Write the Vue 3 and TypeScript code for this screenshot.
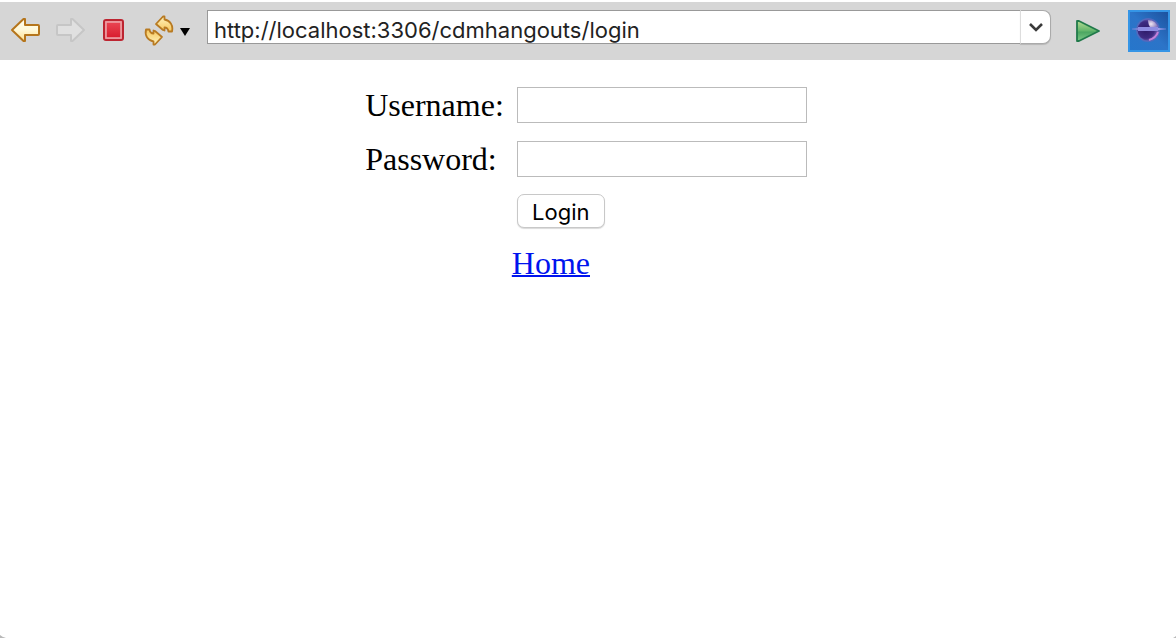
<script setup lang="ts">
import { ref } from 'vue'

const address = ref<string>('http://localhost:3306/cdmhangouts/login')
const username = ref<string>('')
const password = ref<string>('')
</script>

<template>
  <div class="browser">
    <header class="toolbar">
      <nav class="tools" aria-label="Navigation">
        <button class="tool" type="button" aria-label="Back">
          <svg width="32" height="32" viewBox="0 0 32 32">
            <defs>
              <linearGradient id="back-fill" x1="0" y1="0" x2="0" y2="1">
                <stop offset="0" stop-color="#fffdf0" />
                <stop offset="0.5" stop-color="#fff8d8" />
                <stop offset="1" stop-color="#ffe08c" />
              </linearGradient>
            </defs>
            <path d="M2 16L13.5 5H15V11H28Q29 11 29 12V20Q29 21 28 21H15V27H13.5Z" fill="url(#back-fill)" stroke="#b5751b" stroke-width="2" stroke-linejoin="round" />
          </svg>
        </button>
        <button class="tool" type="button" aria-label="Forward">
          <svg width="32" height="32" viewBox="0 0 32 32">
            <path d="M30 16L18.5 5H17V11H4Q3 11 3 12V20Q3 21 4 21H17V27H18.5Z" fill="#e0e0e0" stroke="#c6c6c6" stroke-width="2" stroke-linejoin="round" />
          </svg>
        </button>
        <button class="tool" type="button" aria-label="Stop">
          <svg width="32" height="32" viewBox="0 0 32 32">
            <defs>
              <linearGradient id="stop-fill" x1="0" y1="0" x2="0" y2="1">
                <stop offset="0" stop-color="#ea4553" />
                <stop offset="1" stop-color="#d81c2d" />
              </linearGradient>
            </defs>
            <rect x="6" y="6" width="19" height="20" rx="2" fill="#e0707a" stroke="#bd2531" stroke-width="2" />
            <rect x="8" y="8" width="15" height="16" fill="url(#stop-fill)" stroke="#eea0a5" stroke-width="1.6" />
          </svg>
        </button>
        <div class="refresh">
          <button class="tool" type="button" aria-label="Refresh">
            <svg width="32" height="34" viewBox="0 0 32 34">
              <defs>
                <linearGradient id="refresh-fill" x1="0" y1="0" x2="0" y2="1">
                  <stop offset="0" stop-color="#fff3bd" />
                  <stop offset="1" stop-color="#f6c65c" />
                </linearGradient>
                <linearGradient id="refresh-fill-low" x1="0" y1="1" x2="0" y2="0">
                  <stop offset="0" stop-color="#f6c65c" />
                  <stop offset="1" stop-color="#fff3bd" />
                </linearGradient>
              </defs>
              <g stroke="#b87a22" stroke-width="1.8" stroke-linejoin="round">
                <path d="M14 11L21 3.5L22.5 3.5V6.5C28 7.5 31.5 12 30 18.5H26.5C26 15.5 25 14.5 22.5 14.5V17.5L21 17Z" fill="url(#refresh-fill)" />
                <path d="M14 11L21 3.5L22.5 3.5V6.5C28 7.5 31.5 12 30 18.5H26.5C26 15.5 25 14.5 22.5 14.5V17.5L21 17Z" fill="url(#refresh-fill-low)" transform="rotate(180 17 17.5)" />
              </g>
            </svg>
          </button>
          <button class="tool caret" type="button" aria-label="Refresh options">
            <svg width="12" height="14" viewBox="0 0 12 14">
              <path d="M1 5H11L6 13Z" fill="#000" />
            </svg>
          </button>
        </div>
      </nav>

      <div class="address">
        <input v-model="address" class="address-input" type="text" aria-label="Address" spellcheck="false" />
        <button class="address-toggle" type="button" aria-label="Show address history">
          <svg width="16" height="12" viewBox="0 0 16 12">
            <path d="M2 3L8 9L14 3" fill="none" stroke="#3a3a3a" stroke-width="2.6" />
          </svg>
        </button>
      </div>

      <button class="tool run" type="button" aria-label="Go">
        <svg width="28" height="26" viewBox="0 0 28 26">
          <defs>
            <linearGradient id="run-fill" x1="0" y1="0" x2="0" y2="1">
              <stop offset="0" stop-color="#b4dc92" />
              <stop offset="0.5" stop-color="#62b56b" />
              <stop offset="0.55" stop-color="#4ba661" />
              <stop offset="1" stop-color="#7cc987" />
            </linearGradient>
          </defs>
          <path d="M3 3H5L25 13L5 23H3Z" fill="url(#run-fill)" stroke="#217a4b" stroke-width="1.8" stroke-linejoin="round" />
        </svg>
      </button>

      <svg class="logo" width="42" height="42" viewBox="0 0 42 42" role="img" aria-label="Eclipse">
        <defs>
          <linearGradient id="logo-sky" x1="0" y1="1" x2="1" y2="0">
            <stop offset="0" stop-color="#2676cb" />
            <stop offset="0.5" stop-color="#2c74c8" />
            <stop offset="1" stop-color="#1c529f" />
          </linearGradient>
          <radialGradient id="logo-planet" cx="0.4" cy="0.5" r="0.6">
            <stop offset="0" stop-color="#2d1a68" />
            <stop offset="0.65" stop-color="#3e2b82" />
            <stop offset="1" stop-color="#7e6cc0" />
          </radialGradient>
          <radialGradient id="logo-shine" cx="0.3" cy="0.5" r="0.7">
            <stop offset="0" stop-color="#f0e6f2" />
            <stop offset="1" stop-color="#7f70b8" />
          </radialGradient>
          <linearGradient id="logo-beam" x1="0" y1="0" x2="1" y2="0">
            <stop offset="0" stop-color="#8a8be0" stop-opacity="0.3" />
            <stop offset="0.3" stop-color="#8d98e8" />
            <stop offset="0.75" stop-color="#a9a4ee" />
            <stop offset="1" stop-color="#8a8be0" stop-opacity="0.3" />
          </linearGradient>
        </defs>
        <rect width="42" height="42" fill="#3595e6" />
        <rect x="2" y="2" width="38" height="38" fill="url(#logo-sky)" />
        <circle cx="20" cy="20" r="12" fill="#5269bd" />
        <circle cx="20" cy="20" r="10.5" fill="url(#logo-planet)" />
        <path d="M20 10Q28 10 30 18H23Q20 15 20 10Z" fill="url(#logo-shine)" />
        <path d="M30 22Q28 28 21 30" fill="none" stroke="#c57fda" stroke-width="2" />
        <rect x="4" y="18" width="34" height="2" fill="url(#logo-beam)" />
        <rect x="10" y="17" width="20" height="4" fill="#8f8ce2" />
      </svg>
    </header>

    <main class="page">
      <form class="login" @submit.prevent>
        <label class="label" for="username">Username:</label>
        <input id="username" v-model="username" class="field" type="text" />
        <label class="label" for="password">Password:</label>
        <input id="password" v-model="password" class="field" type="password" />
        <button class="submit" type="submit">Login</button>
        <a class="home" href="#">Home</a>
      </form>
    </main>

    <svg class="corner corner-left" width="6" height="3" viewBox="0 0 6 3" aria-hidden="true">
      <path d="M0 0Q2 2 6 3H0Z" fill="#b8b8b8" />
    </svg>
    <svg class="corner corner-right" width="3" height="2" viewBox="0 0 3 2" aria-hidden="true">
      <path d="M3 0Q2 1 0 2H3Z" fill="#b8b8b8" />
    </svg>
  </div>
</template>

<style>
body {
  margin: 0;
  background: #fff;
}
</style>

<style scoped>
.browser {
  position: relative;
  box-sizing: border-box;
  min-height: 100vh;
  padding-top: 2px;
  background: #fff;
}

.toolbar {
  display: flex;
  align-items: flex-start;
  box-sizing: border-box;
  padding: 8px 6px 8px 10px;
  background: #d6d6d6;
}

.tools {
  display: flex;
  align-items: center;
  gap: 12px;
  height: 40px;
}

.refresh {
  display: flex;
  align-items: center;
  gap: 5px;
}

.tool {
  display: flex;
  align-items: center;
  justify-content: center;
  margin: 0;
  padding: 0;
  border: 0;
  background: none;
}

.address {
  display: flex;
  flex: 1;
  min-width: 0;
  height: 34px;
  margin: 0 13px 0 16px;
}

.address-input {
  flex: 1;
  min-width: 0;
  box-sizing: border-box;
  margin: 0;
  padding: 6px 6px 0;
  border: 1px solid #999;
  border-right: 0;
  border-radius: 0;
  outline: 0;
  background: #fff;
  color: #222;
  font: 22px/26px Inter, "Liberation Sans", sans-serif;
}

.address-toggle {
  display: flex;
  align-items: center;
  justify-content: center;
  box-sizing: border-box;
  width: 31px;
  margin: 0;
  padding: 0;
  border: 1px solid #aaa;
  border-left-color: #ddd;
  border-radius: 0 8px 8px 0;
  background: #fff;
  box-shadow: 0 1px 1px rgba(0, 0, 0, 0.15);
}

.run {
  width: 48px;
  height: 42px;
  margin-right: 16px;
}

.logo {
  display: block;
}

.page {
  display: flex;
  justify-content: center;
  padding-top: 26px;
}

.login {
  display: grid;
  grid-template-columns: auto 299px;
  align-items: center;
  column-gap: 8px;
  row-gap: 16px;
  color: #000;
  font: 32px/38px "Liberation Serif", "Times New Roman", serif;
}

.field {
  box-sizing: border-box;
  height: 36px;
  margin: 0 4px 0 5px;
  padding: 2px 6px;
  border: 1px solid #bbb;
  border-radius: 0;
  outline: 0;
  background: #fff;
  font: 22px "Liberation Sans", Arial, sans-serif;
}

.submit {
  grid-column: 2;
  justify-self: start;
  box-sizing: border-box;
  width: 88px;
  height: 34px;
  margin: 0 0 0 5px;
  padding: 2px 0 0;
  border: 1px solid #c8c8c8;
  border-radius: 7px;
  background: #fff;
  box-shadow: 0 1px 1px rgba(0, 0, 0, 0.15);
  color: #000;
  font: 22px Inter, "Liberation Sans", sans-serif;
}

.home {
  grid-column: 2;
  justify-self: start;
  color: #0014ee;
  text-decoration-thickness: 2px;
}

.corner {
  position: absolute;
  bottom: 0;
}

.corner-left {
  left: 0;
}

.corner-right {
  right: 0;
}
</style>
